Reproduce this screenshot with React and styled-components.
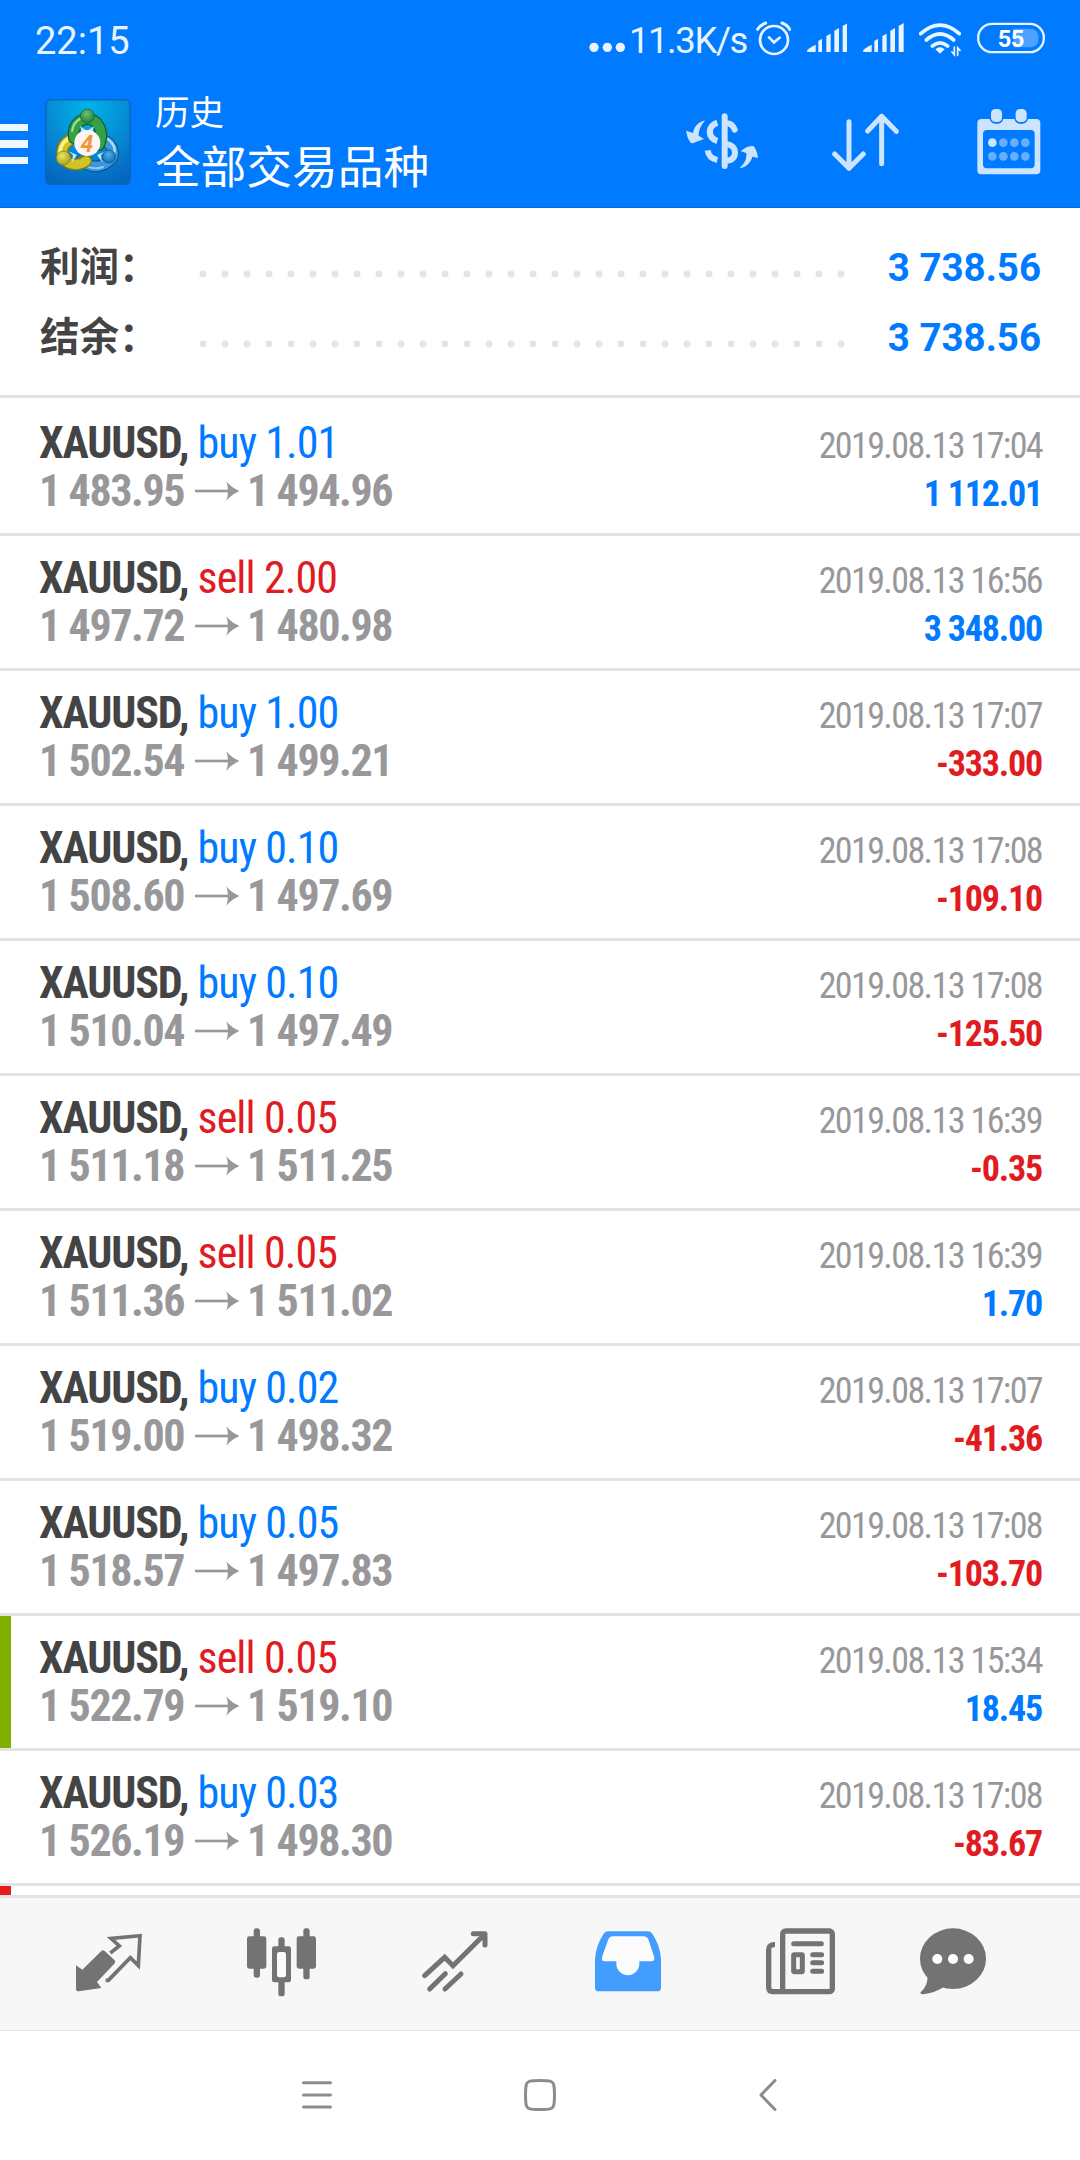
import React from 'react';
import styled, { createGlobalStyle } from 'styled-components';

const trades = [
  { side: 'buy', lots: '1.01', open: '1 483.95', close: '1 494.96', time: '2019.08.13 17:04', profit: '1 112.01' },
  { side: 'sell', lots: '2.00', open: '1 497.72', close: '1 480.98', time: '2019.08.13 16:56', profit: '3 348.00' },
  { side: 'buy', lots: '1.00', open: '1 502.54', close: '1 499.21', time: '2019.08.13 17:07', profit: '-333.00' },
  { side: 'buy', lots: '0.10', open: '1 508.60', close: '1 497.69', time: '2019.08.13 17:08', profit: '-109.10' },
  { side: 'buy', lots: '0.10', open: '1 510.04', close: '1 497.49', time: '2019.08.13 17:08', profit: '-125.50' },
  { side: 'sell', lots: '0.05', open: '1 511.18', close: '1 511.25', time: '2019.08.13 16:39', profit: '-0.35' },
  { side: 'sell', lots: '0.05', open: '1 511.36', close: '1 511.02', time: '2019.08.13 16:39', profit: '1.70' },
  { side: 'buy', lots: '0.02', open: '1 519.00', close: '1 498.32', time: '2019.08.13 17:07', profit: '-41.36' },
  { side: 'buy', lots: '0.05', open: '1 518.57', close: '1 497.83', time: '2019.08.13 17:08', profit: '-103.70' },
  { side: 'sell', lots: '0.05', open: '1 522.79', close: '1 519.10', time: '2019.08.13 15:34', profit: '18.45', marker: '#7fb000' },
  { side: 'buy', lots: '0.03', open: '1 526.19', close: '1 498.30', time: '2019.08.13 17:08', profit: '-83.67' },
];

const summary = [
  { label: '利润：', value: '3 738.56' },
  { label: '结余：', value: '3 738.56' },
];

function SignalIcon() {
  return (
    <svg width="40.7" height="40" viewBox="680 30 122 120" fill="#e8f4ff">
      <path d="M680 122 Q680 117 706 104 V126 H684 Q680 126 680 122Z" />
      <path d="M714 93 L725 86 V126 H714Z" />
      <path d="M738 78 L751 71 V126 H738Z" />
      <path d="M762 62 L776 54 V126 H762Z" />
      <path d="M787 48 L802 39 V126 H787Z" />
    </svg>
  );
}

function Logo() {
  return (
    <svg width="86" height="86" viewBox="0 0 86 86">
      <defs>
        <radialGradient id="tile" cx="50%" cy="10%" r="95%">
          <stop offset="0" stopColor="#00b4ea" />
          <stop offset="0.55" stopColor="#0787d2" />
          <stop offset="1" stopColor="#0565bd" />
        </radialGradient>
        <radialGradient id="green" cx="45%" cy="35%" r="65%">
          <stop offset="0" stopColor="#6cc279" />
          <stop offset="1" stopColor="#1f7f3a" />
        </radialGradient>
        <radialGradient id="yellow" cx="40%" cy="35%" r="65%">
          <stop offset="0" stopColor="#ece565" />
          <stop offset="1" stopColor="#a8a31b" />
        </radialGradient>
        <radialGradient id="blue" cx="45%" cy="35%" r="65%">
          <stop offset="0" stopColor="#4fb0e8" />
          <stop offset="1" stopColor="#0f6db4" />
        </radialGradient>
      </defs>
      <rect x="0.8" y="0.8" width="84.4" height="84.4" rx="4.5" fill="url(#tile)" stroke="#0668c0" strokeWidth="1.6" />
      <g fill="none" strokeLinecap="round">
        <path d="M58 41 C68 45 71 56 65 61 C56 70 44 69 37 61" stroke="#0a559b" strokeWidth="12" />
        <path d="M58 41 C68 45 71 56 65 61 C56 70 44 69 37 61" stroke="#3b98da" strokeWidth="9.5" />
        <path d="M63 40 C69 45 71 50 69 55" stroke="#a9dcf7" strokeWidth="2.5" />
        <path d="M40 66 C46 70 52 70 58 68" stroke="#8ccbf2" strokeWidth="2" />
        <path d="M32 39 C20 40 15 50 18 59 C24 67 34 67 41 62" stroke="#7c7d10" strokeWidth="12" />
        <path d="M32 39 C20 40 15 50 18 59 C24 67 34 67 41 62" stroke="#cfc425" strokeWidth="9.5" />
        <path d="M28 37 C19 41 15 47 15 54" stroke="#fdf382" strokeWidth="3.5" />
        <path d="M29 39 C27 28 34 20 42 20 C53 20 60 33 54 46" stroke="#125f2c" strokeWidth="12" />
        <path d="M29 39 C27 28 34 20 42 20 C53 20 60 33 54 46" stroke="#35a047" strokeWidth="9.5" />
        <path d="M27 32 C28 26 31 22 35 20" stroke="#9be39b" strokeWidth="2" />
      </g>
      <path d="M35 27 L42 32 L49 27 L47 35 H37Z" fill="#e9f7ff" opacity="0.8" />
      <path d="M23 52 L28 56 L27 63 L32 56Z M61 52 L56 56 L57 63 L52 56Z" fill="#f4fbff" opacity="0.8" />
      <circle cx="42.3" cy="17" r="7" fill="url(#green)" stroke="#1b6b34" strokeWidth="0.8" />
      <circle cx="18.5" cy="59" r="7" fill="url(#yellow)" stroke="#8a8718" strokeWidth="0.8" />
      <circle cx="64" cy="57.5" r="6.5" fill="url(#blue)" stroke="#0b5798" strokeWidth="0.8" />
      <circle cx="42.3" cy="44" r="13" fill="#fdf6f4" />
      <text x="42" y="52.5" textAnchor="middle" fontFamily="Roboto, sans-serif" fontStyle="italic" fontWeight="700" fontSize="23" fill="#f0973a">4</text>
    </svg>
  );
}

function PriceArrow() {
  return (
    <svg width="44.3" height="20" viewBox="584 841 133 60" fill="#98989b">
      <rect x="584" y="867" width="110" height="8" />
      <path d="M678 842 Q692 860 717 871 Q692 882 678 900 Q688 871 678 842Z" />
    </svg>
  );
}

export default function App() {
  return (
    <Screen>
      <GlobalStyle />
      <Header>
        <StatusBar>
          <Clock>22:15</Clock>
          <svg width="36" height="40" viewBox="28 30 108 120" fill="#e8f4ff">
            <circle cx="43" cy="112" r="14" />
            <circle cx="83" cy="112" r="14" />
            <circle cx="122" cy="112" r="14" />
          </svg>
          <NetSpeed>11.3K/s</NetSpeed>
          <StatusIcons>
            <svg width="35" height="40" viewBox="528 30 105 120" fill="none" stroke="#e8f4ff" strokeLinecap="round" strokeWidth="8">
              <circle cx="582" cy="90" r="42" />
              <path d="M533 58 Q541 45 557 39 M629 58 Q622 45 606 39" strokeWidth="9" />
              <path d="M567 82 L582 97 L599 83" />
            </svg>
            <SignalIcon />
            <SignalIcon />
            <svg width="42" height="40" viewBox="1017 30 126 120" fill="none" stroke="#e8f4ff" strokeLinecap="round">
              <path d="M1022 71 Q1080 20 1138 71 M1039 90 Q1080 54 1121 90 M1057 108 Q1080 89 1103 108" strokeWidth="11" />
              <path d="M1070 118 Q1080 111 1090 118 L1080 128Z" fill="#e8f4ff" strokeWidth="5" />
              <path d="M1123 111 V134 L1116 126 M1133 136 V113 L1140 121" strokeWidth="5" />
            </svg>
            <svg width="68" height="40" viewBox="1191 30 204 120">
              <rect x="1194.5" y="41.5" width="197" height="85" rx="42" fill="none" stroke="#e8f4ff" strokeWidth="7" />
              <path d="M1300 56 H1348 Q1376 56 1376 84 Q1376 112 1348 112 H1300Z" fill="#fff" opacity="0.3" />
              <text x="1292" y="110" textAnchor="middle" fontFamily="Roboto, sans-serif" fontWeight="700" fontSize="71" letterSpacing="-2" fill="#fff">55</text>
            </svg>
          </StatusIcons>
        </StatusBar>

        <AppBar>
          <MenuButton>
            <MenuBar />
            <MenuBar />
            <MenuBar />
          </MenuButton>
          <LogoLink>
            <Logo />
          </LogoLink>
          <Titles>
            <Subtitle>历史</Subtitle>
            <Title>全部交易品种</Title>
          </Titles>
          <Actions>
            <svg width="72" height="72" viewBox="318 285 216 216" fill="none" stroke="#cce4fd" strokeWidth="18">
              <path d="M376 328 C355 332 342 348 339 366 L318 359 Q322 382 331 394 Q334 398 340 396 L372 384 L356 374 C356 355 364 342 376 328Z" fill="#cce4fd" stroke="none" />
              <path d="M478 472 C495 455 500 445 499 426 L482 421 Q500 404 521 405 Q532 420 534 441 L517 437 C512 455 500 468 478 472Z" fill="#cce4fd" stroke="none" />
              <path d="M412 335 C382 344 382 381 412 390" strokeWidth="19" />
              <path d="M383 418 Q386 441 412 447" />
              <path d="M434 316 V465 M436 337 Q456 335 464 356 M436 398 Q465 403 465 425 Q465 447 436 450" strokeLinecap="round" />
            </svg>
            <SortIcon width="67.3" height="72" viewBox="755 285 202 216" fill="none" stroke="#cce4fd" strokeWidth="15" strokeLinecap="round" strokeLinejoin="round">
              <path d="M806 332 V472 M763 429 L806 472 L849 429" />
              <path d="M904 458 V316 M862 360 L904 316 L948 361" />
            </SortIcon>
            <svg width="64" height="72" viewBox="1190 285 192 216" fill="#cce4fd">
              <path fillRule="evenodd" d="M1203 324 H1368 Q1380 324 1380 336 V478 Q1380 490 1368 490 H1203 Q1191 490 1191 478 V336 Q1191 324 1203 324Z M1220 357 Q1208 357 1208 369 V460 Q1208 472 1220 472 H1351 Q1363 472 1363 460 V369 Q1363 357 1351 357Z" />
              <rect x="1228" y="290" width="41" height="48" rx="16" fill="#007aff" />
              <rect x="1302" y="290" width="41" height="48" rx="16" fill="#007aff" />
              <rect x="1232" y="294" width="33" height="39" rx="13" />
              <rect x="1306" y="294" width="33" height="39" rx="13" />
              <circle cx="1236" cy="395" r="13" />
              <g opacity="0.5">
                <circle cx="1269" cy="395" r="13" />
                <circle cx="1302" cy="395" r="13" />
                <circle cx="1335" cy="395" r="13" />
                <circle cx="1236" cy="436" r="13" />
                <circle cx="1269" cy="436" r="13" />
                <circle cx="1302" cy="436" r="13" />
                <circle cx="1335" cy="436" r="13" />
              </g>
            </svg>
          </Actions>
        </AppBar>
      </Header>

      <Summary>
        {summary.map((item) => (
          <SummaryRow key={item.label}>
            <Label>{item.label}</Label>
            <Dots />
            <Value>{item.value}</Value>
          </SummaryRow>
        ))}
      </Summary>

      <TradeList>
        {trades.map((t, i) => (
          <Trade key={i} $marker={t.marker}>
            <TradeLine>
              <Symbol>
                XAUUSD, <Side $sell={t.side === 'sell'}>{t.side} {t.lots}</Side>
              </Symbol>
              <Time>{t.time}</Time>
            </TradeLine>
            <TradeLine>
              <Prices>
                <OpenPrice>{t.open}</OpenPrice>
                <PriceArrow />
                <ClosePrice>{t.close}</ClosePrice>
              </Prices>
              <Profit $loss={t.profit.startsWith('-')}>{t.profit}</Profit>
            </TradeLine>
          </Trade>
        ))}
        <NextTrade />
      </TradeList>

      <TabBar>
        <svg width="66" height="70" viewBox="108 140 198 210">
          <path d="M108 255 L127 268 L184 212 Q189 208 194 212 L224 240 Q228 245 223 250 L171 305 L184 323 L116 333 Q108 333 108 326Z" fill="#737373" />
          <path d="M211 218 L238 197 L213 174 L300 166 L295 256 L271 232 L205 300 H197" fill="none" stroke="#737373" strokeWidth="11" />
        </svg>
        <svg width="69" height="70" viewBox="621 140 207 210" fill="#737373">
          <rect x="621" y="168" width="58" height="97" rx="7" />
          <rect x="641" y="144" width="19" height="148" rx="8" />
          <rect x="770" y="168" width="58" height="97" rx="7" />
          <rect x="790" y="144" width="19" height="153" rx="8" />
          <rect x="715" y="171" width="19" height="177" rx="8" />
          <rect x="696" y="198" width="57" height="108" rx="7" />
          <rect x="711" y="215" width="27" height="76" rx="7" fill="#fbfbfb" />
        </svg>
        <svg width="66" height="70" viewBox="1145 140 198 210" fill="none" stroke="#737373" strokeWidth="15" strokeLinecap="round">
          <path d="M1153 286 L1213 231 L1238 256 L1330 165" />
          <path d="M1299 160 H1334 V194" strokeLinejoin="round" />
          <path d="M1168 326 L1215 280 M1214 326 L1262 281" />
        </svg>
        <svg width="66" height="70" viewBox="165 140 198 210">
          <path d="M205 153 H323 Q332 153 337 160 Q360 195 363 235 V322 Q363 333 352 333 H176 Q165 333 165 322 V235 Q168 195 191 160 Q196 153 205 153Z" fill="#439dff" />
          <path d="M218 168 H310 Q320 168 325 177 L343 231 Q345 243 335 243 H298 V250 A34.5 34.5 0 0 1 229 250 V243 H193 Q184 243 186 231 L205 177 Q209 168 218 168Z" fill="#fbfbfb" />
        </svg>
        <svg width="69" height="70" viewBox="681 140 207 210" fill="none" stroke="#737373" strokeWidth="15" strokeLinecap="round">
          <rect x="731" y="152" width="149" height="182" rx="9" strokeWidth="16" />
          <path d="M708 193 Q689 192 689 208 V321 Q689 334 702 334 H735" strokeWidth="16" strokeLinecap="butt" />
          <path d="M764 190 H847 M821 223 H848 M821 247 H848 M821 273 H848" />
          <rect x="764" y="223" width="26" height="51" rx="2" />
        </svg>
        <svg width="66" height="70" viewBox="1140 140 198 210" fill="#737373">
          <ellipse cx="1239" cy="235" rx="99" ry="91" />
          <path d="M1160 270 Q1170 310 1143 334 Q1137 342 1150 342 Q1185 338 1215 318Z" />
          <g fill="#fff">
            <circle cx="1192" cy="236" r="15" />
            <circle cx="1239" cy="236" r="15" />
            <circle cx="1286" cy="236" r="15" />
          </g>
        </svg>
      </TabBar>

      <SystemNav>
        <svg width="30" height="32" viewBox="0 0 30 32" stroke="#8c8c8c" strokeWidth="3" strokeLinecap="round">
          <path d="M1.5 3.8 H28.5 M1.5 16 H28.5 M1.5 28 H28.5" />
        </svg>
        <svg width="32" height="32" viewBox="0 0 32 32" fill="none" stroke="#8c8c8c" strokeWidth="3">
          <path d="M16 1.5 C26 1.5 28.5 2 29.5 5 C30.8 9 30.8 23 29.5 27 C28.5 30 26 30.5 16 30.5 C6 30.5 3.5 30 2.5 27 C1.2 23 1.2 9 2.5 5 C3.5 2 6 1.5 16 1.5Z" />
        </svg>
        <svg width="18" height="32" viewBox="0 0 18 32" fill="none" stroke="#8c8c8c" strokeWidth="3" strokeLinecap="round" strokeLinejoin="round">
          <path d="M16 1.5 L2 16 L16 30.5" />
        </svg>
      </SystemNav>
    </Screen>
  );
}

const GlobalStyle = createGlobalStyle`
  body {
    margin: 0;
    background: #fff;
  }
  svg {
    display: block;
    flex: none;
  }
`;

const Screen = styled.div`
  width: 1080px;
  height: 2160px;
  display: flex;
  flex-direction: column;
  overflow: hidden;
  background: #fff;
  font-family: Roboto, 'Noto Sans CJK SC', sans-serif;
`;

const Header = styled.header`
  height: 208px;
  box-sizing: border-box;
  background: #007aff;
  box-shadow: inset 0 -1px 0 #0468d8;
`;

const StatusBar = styled.div`
  display: flex;
  align-items: center;
  height: 75px;
  box-sizing: border-box;
  padding: 5px 35px 0 35px;
  color: #e8f4ff;
`;

const Clock = styled.div`
  flex: 1;
  padding-top: 2px;
  font-size: 38px;
  line-height: 40px;
`;

const NetSpeed = styled.div`
  width: 116px;
  margin-left: 4px;
  padding-top: 1px;
  font-size: 36.5px;
  line-height: 40px;
  letter-spacing: -1.4px;
  white-space: nowrap;
`;

const StatusIcons = styled.div`
  display: flex;
  gap: 15.7px;
  margin-left: 11px;
`;

const AppBar = styled.div`
  display: flex;
  align-items: center;
  height: 133px;
  padding-right: 39px;
`;

const MenuButton = styled.div`
  display: flex;
  flex-direction: column;
  gap: 9px;
  width: 27.5px;
  padding-top: 5px;
`;

const MenuBar = styled.div`
  height: 7.5px;
  background: #eff7ff;
`;

const LogoLink = styled.div`
  margin-left: 17.5px;
`;

const Titles = styled.div`
  flex: 1;
  margin-left: 24px;
  padding-bottom: 1px;
  color: #fff;
  font-family: 'Noto Sans CJK SC', sans-serif;
  font-weight: 400;
`;

const Subtitle = styled.div`
  font-size: 34.5px;
  line-height: 38px;
  margin-bottom: 7px;
`;

const Title = styled.div`
  font-size: 45.7px;
  line-height: 56px;
`;

const Actions = styled.div`
  display: flex;
  gap: 73.7px;
`;

const SortIcon = styled.svg`
  margin-right: 4px;
`;

const Summary = styled.section`
  height: 190px;
  box-sizing: border-box;
  padding: 21px 39px 0 40px;
  border-bottom: 3px solid #e4e4e4;
`;

const SummaryRow = styled.div`
  display: flex;
  align-items: baseline;
  height: 70px;
  line-height: 70px;
`;

const Label = styled.div`
  width: 152px;
  color: #444;
  font-family: 'Noto Sans CJK SC', sans-serif;
  font-size: 39.5px;
  font-weight: 700;
  white-space: nowrap;
`;

const Dots = styled.div`
  align-self: flex-start;
  width: 660px;
  height: 8px;
  margin-top: 41px;
  background: radial-gradient(circle at center, #e4e4e4 3px, transparent 4px) 0 0 / 22px 8px repeat-x;
`;

const Value = styled.div`
  flex: 1;
  color: #007aff;
  font-size: 38.5px;
  font-weight: 700;
  text-align: right;
`;

const TradeList = styled.div`
  height: 1497px;
  box-sizing: border-box;
  padding-top: 3px;
  overflow: hidden;
  font-family: 'Roboto Condensed', Roboto, sans-serif;
`;

const Trade = styled.div`
  height: 135px;
  box-sizing: border-box;
  padding: 17.5px 38px 0 39px;
  border-bottom: 3px solid #e4e4e4;
  box-shadow: ${(p) => (p.$marker ? `inset 11px 0 0 ${p.$marker}` : 'none')};
`;

const NextTrade = styled.div`
  height: 9px;
  border-left: 11px solid #e81c1f;
`;

const TradeLine = styled.div`
  display: flex;
  align-items: baseline;
  justify-content: space-between;
  height: 48px;
  line-height: 48px;
  white-space: nowrap;
`;

const Symbol = styled.div`
  color: #444;
  font-size: 44px;
  font-weight: 700;
  letter-spacing: -1.15px;
`;

const Side = styled.span`
  color: ${(p) => (p.$sell ? '#e11b22' : '#007aff')};
  font-weight: 400;
  letter-spacing: -0.9px;
`;

const Time = styled.div`
  color: #98989b;
  font-size: 36px;
  letter-spacing: -1.6px;
`;

const Prices = styled.div`
  display: flex;
  align-items: center;
  color: #98989b;
  font-size: 44px;
  font-weight: 700;
  letter-spacing: -1.4px;
`;

const OpenPrice = styled.div`
  width: 155.7px;
`;

const ClosePrice = styled.div`
  margin-left: 8px;
`;

const Profit = styled.div`
  color: ${(p) => (p.$loss ? '#e11b22' : '#007aff')};
  font-size: 36px;
  font-weight: 700;
  letter-spacing: -1.2px;
`;

const TabBar = styled.nav`
  display: grid;
  grid-template-columns: repeat(5, 173px) 131px;
  justify-items: center;
  align-items: start;
  height: 136px;
  box-sizing: border-box;
  padding: 28.7px 0 0 22.3px;
  border-top: 3px solid #e2e2e2;
  border-bottom: 1px solid #e4e4e4;
  background: #f7f7f7;
`;

const SystemNav = styled.div`
  display: grid;
  grid-template-columns: 222px 235px 18px;
  flex: 1;
  align-items: center;
  padding: 0 0 2px 302px;
`;
